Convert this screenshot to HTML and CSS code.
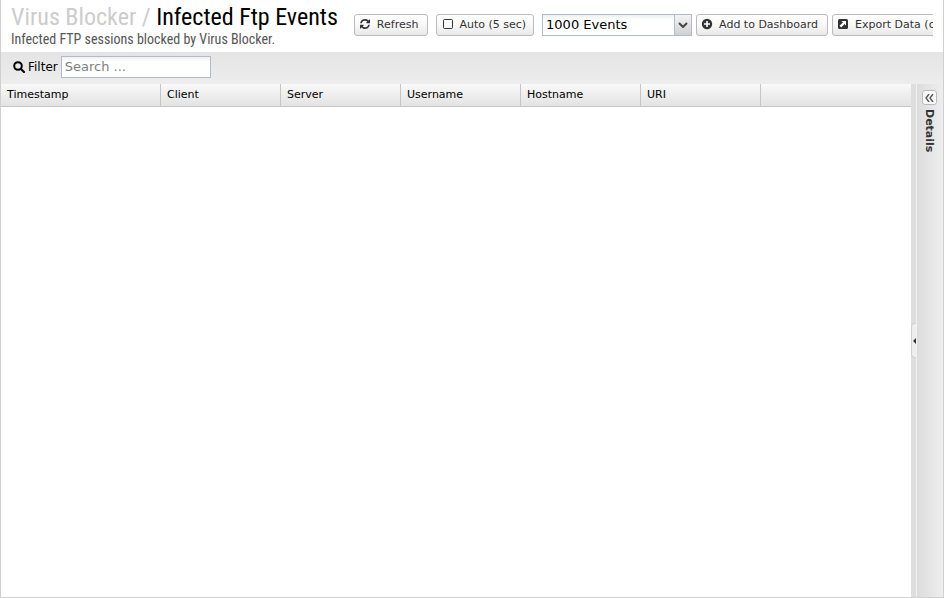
FILE: index.html
```
<!DOCTYPE html>
<html lang="en">
  <head>
    <meta charset="utf-8">
    <title>Infected Ftp Events</title>
    <link rel="stylesheet" href="styles.css">
  </head>
  <body>
    <div class="panel">
      <header class="header">
        <div class="heading">
          <h1><span class="category">Virus Blocker /</span> Infected Ftp Events</h1>
          <p>Infected FTP sessions blocked by Virus Blocker.</p>
        </div>
        <div class="actions">
          <button type="button" class="btn refresh">
            <svg class="icon" viewBox="0 0 1536 1536"><path d="M1511 928q0 5-1 7-64 268-268 434.500T764 1536q-146 0-282.500-55T238 1324l-129 129q-19 19-45 19t-45-19-19-45V960q0-26 19-45t45-19h448q26 0 45 19t19 45-19 45l-137 137q71 66 161 102t187 36q134 0 250-65t186-179q11-17 53-117 8-23 30-23h192q13 0 22.500 9.500t9.500 22.500zm25-800v448q0 26-19 45t-45 19h-448q-26 0-45-19t-19-45 19-45l138-138Q969 256 768 256q-134 0-250 65T332 500q-11 17-53 117-8 23-30 23H50q-13 0-22.500-9.500T18 608v-7q65-268 270-434.500T768 0q146 0 284 55.500T1297 212l130-129q19-19 45-19t45 19 19 45z"/></svg>
            Refresh
          </button>
          <button type="button" class="btn auto">
            <svg class="icon" viewBox="0 0 12 12"><rect x="1.500" y="1.500" width="9" height="9" rx="1" fill="none" stroke="currentColor"/></svg>
            Auto (5 sec)
          </button>
          <div class="combo">
            <select class="field" aria-label="Limit">
              <option>1000 Events</option>
            </select>
            <span class="trigger"><svg viewBox="0 0 10 6"><path d="M1 1l4 4 4-4" fill="none" stroke="#444" stroke-width="2"/></svg></span>
          </div>
          <button type="button" class="btn">
            <svg class="icon" viewBox="0 0 12 12"><circle cx="6" cy="6" r="5.200"/><path d="M6 3v6M3 6h6" stroke="#fff" stroke-width="1.600"/></svg>
            Add to Dashboard
          </button>
          <button type="button" class="btn">
            <svg class="icon" viewBox="0 0 12 12"><rect x="1" y="1" width="10" height="10" rx="1.500"/><path d="M4.500 3H9v4.500L7.600 6.100 4.200 9.500 2.500 7.800 5.900 4.400z" fill="#fff"/></svg>
            Export Data (csv)
          </button>
        </div>
      </header>

      <div class="filter">
        <svg class="icon" viewBox="0 0 12 12"><circle cx="5" cy="5" r="3.800" fill="none" stroke="currentColor" stroke-width="2"/><path d="M8 8l3 3" stroke="currentColor" stroke-width="2.200" stroke-linecap="round"/></svg>
        <label for="search">Filter</label>
        <input type="text" id="search" class="field" placeholder="Search ...">
      </div>

      <main class="content">
        <div class="grid">
          <table>
            <thead>
              <tr>
                <th class="time">Timestamp</th>
                <th>Client</th>
                <th>Server</th>
                <th>Username</th>
                <th>Hostname</th>
                <th>URI</th>
                <td class="rest"></td>
              </tr>
            </thead>
          </table>
        </div>
        <div class="splitter">
          <button type="button" class="collapse" aria-label="Collapse"><svg viewBox="0 0 3 6"><path d="M3 0v6L0 3z" fill="#333"/></svg></button>
        </div>
        <aside class="details">
          <button type="button" class="expand" aria-label="Expand details"><svg viewBox="0 0 9 8"><path d="M4 0L1 4l3 4M8 0L5 4l3 4" fill="none" stroke="#555" stroke-width="1.400"/></svg></button>
          <h2>Details</h2>
        </aside>
      </main>
    </div>
  </body>
</html>
```
FILE: styles.css
```
* { box-sizing: border-box; }
body { margin: 0; font: 11px "DejaVu Sans", sans-serif; color: #000; background: #fff; }
h1, h2, p { margin: 0; font-weight: normal; }
button { font: inherit; color: #333; cursor: pointer; }

.panel { display: flex; flex-direction: column; min-height: 100vh; border: 1px solid #d0d0d0; border-top: 0; }

.header { display: flex; gap: 16px; height: 52px; padding: 0 10px; overflow: hidden; }
.heading { flex: none; padding-top: 2px; font-family: "Roboto Condensed", "Liberation Sans Narrow", Roboto, sans-serif; white-space: nowrap; }
.heading h1 { font-size: 24px; line-height: 30px; }
.heading p { font-size: 14px; line-height: 15px; color: #555; }
.category { color: #ccc; }

.actions { display: flex; flex: 1; gap: 4px; min-width: 0; padding-top: 14px; overflow: hidden; }
.btn { display: flex; flex: none; align-items: center; gap: 6px; height: 22px; padding: 0 9px 2px 4px; border: 1px solid #bbb; border-radius: 3px; background: linear-gradient(#fff, #f8f8f8 50%, #e8e8e8); white-space: nowrap; }
.refresh, .auto { margin-right: 4px; }
.auto { gap: 5px; padding: 0 7px 2px 5px; }
.icon { flex: none; width: 12px; height: 12px; fill: currentColor; }
.refresh .icon { padding: 1px; }

.field { height: 22px; padding: 0 3px 1px; border: 1px solid #b5b8c8; border-radius: 0; font: 13px "DejaVu Sans", sans-serif; color: #000; background: linear-gradient(#eef1f1, #fff 5px); }
.field::placeholder { color: #808080; }
.combo { position: relative; flex: none; width: 150px; }
.combo .field { width: 100%; padding-bottom: 2px; appearance: none; }
.trigger { position: absolute; top: 0; right: 0; display: flex; align-items: center; justify-content: center; width: 18px; height: 22px; border: 1px solid #b5b8c8; background: linear-gradient(#f4f4f4, #d0d0d0); pointer-events: none; }
.trigger svg { width: 10px; height: 6px; }

.filter { display: flex; align-items: center; gap: 3px; height: 32px; padding: 0 12px 2px; font-size: 12px; background: linear-gradient(#e4e4e4, #ededed); }
.filter .field { width: 150px; }

.content { display: flex; flex: 1; }
.grid { flex: 1; min-width: 0; }
table { width: 100%; table-layout: fixed; border-collapse: separate; border-spacing: 0; }
th, td { height: 23px; padding: 0 6px 2px; border-bottom: 1px solid #c5c5c5; background: linear-gradient(#f9f9f9, #e3e3e3); }
th { width: 120px; border-right: 1px solid #c5c5c5; font-weight: normal; text-align: left; }
.time { width: 160px; }

.splitter { display: flex; align-items: center; width: 6px; border-right: 1px solid #f0f0f0; background: #dedede; }
.collapse { display: flex; align-items: center; justify-content: flex-end; width: 5px; height: 35px; padding: 0; border: 1px solid #d0d0d0; border-right: 0; border-radius: 4px 0 0 4px; background: #eee; }
.collapse svg { flex: none; width: 3px; height: 6px; }
.details { display: flex; flex-direction: column; align-items: center; gap: 4px; width: 26px; padding: 6px 2px 0 0; background: linear-gradient(to right, #dcdcdc, #eee); }
.expand { display: flex; align-items: center; justify-content: center; width: 15px; height: 15px; padding: 0; border: 1px solid #bbb; border-radius: 3px; background: #f8f8f8; }
.expand svg { width: 9px; height: 8px; }
.details h2 { font-size: 11px; font-weight: bold; line-height: 14px; color: #333; writing-mode: vertical-rl; }
```
